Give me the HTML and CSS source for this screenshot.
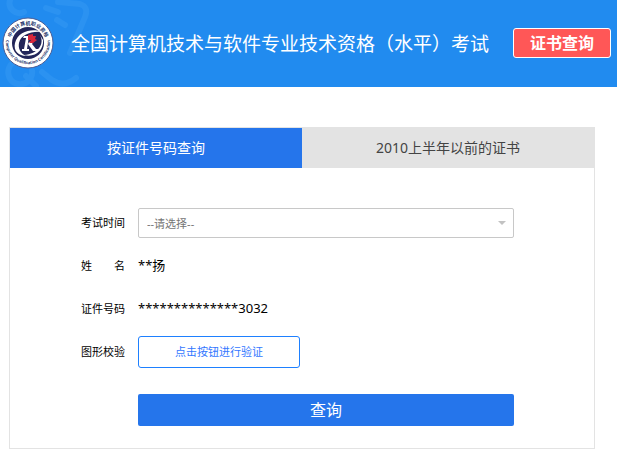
FILE: index.html
```html
<!DOCTYPE html>
<html lang="zh-CN">
	<head>
		<meta charset="UTF-8">
		<title>证书查询</title>
		<link rel="stylesheet" href="styles.css">
	</head>
	<body>
		<header class="header">
			<svg class="header-bg" width="100" height="87" viewBox="0 0 100 87" aria-hidden="true">
				<g fill="none" stroke="#2b92f1" stroke-width="6" stroke-linecap="round">
					<path d="M10 0a10 10 0 0 0 14 12M58 2l22 2q9 3 5 13l-15 36M57 20l8 5M46 8l12 4"/>
					<path d="M14 62a12 12 0 1 0 18 8M26 76l10 10M42 72l10 8q12 8 24 -2"/>
				</g>
			</svg>
			<svg class="logo" width="52" height="52" viewBox="0 0 52 52" role="img" aria-label="logo">
				<defs>
					<path id="arc-top" d="M8 26a18 18 0 0 1 36 0"/>
					<path id="arc-bottom" d="M6 16a22 22 0 1 0 40 0"/>
				</defs>
				<circle cx="26" cy="26" r="25" fill="#fff" stroke="#4a5d96" stroke-width="1"/>
				<circle cx="26" cy="26" r="16" fill="#222558"/>
				<text class="logo-cn"><textPath href="#arc-top" startOffset="50%">中国计算机职业资格</textPath></text>
				<text class="logo-en"><textPath href="#arc-bottom" startOffset="50%">Computer Qualification Certification</textPath></text>
				<path d="M40 15C31 11 16 14 13 26c-2 8 4 13 11 13-6-3-8-8-7-13 2-8 11-12 23-11z" fill="#fff"/>
				<path d="M38 18c5 9-2 19-16 20 11 3 20-5 19-15z" fill="#fff"/>
				<path d="M22 19h5l-2 13h2v2h-7v-2h2l2-11h-3zM27 25l5-1-2 3 4 5h2v2h-5l-5-7z" fill="#fff"/>
				<path d="M26 18l5-1 0 2 3 0-1 3 2 1-4 3-4 0 2-3-3 0z" fill="#d8283b"/>
			</svg>
			<h1 class="title">全国计算机技术与软件专业技术资格（水平）考试</h1>
			<a class="badge" href="#query">证书查询</a>
		</header>
		<main class="card" id="query">
			<div class="tabs">
				<button type="button" class="tab active">按证件号码查询</button>
				<button type="button" class="tab">2010上半年以前的证书</button>
			</div>
			<form class="form">
				<label class="label" for="time">考试时间</label>
				<div class="select-box">
					<select id="time" class="select">
						<option>--请选择--</option>
					</select>
				</div>
				<span class="label">姓　　名</span>
				<span class="value">**扬</span>
				<span class="label">证件号码</span>
				<span class="value">**************3032</span>
				<label class="label" for="verify">图形校验</label>
				<button type="button" id="verify" class="verify">点击按钮进行验证</button>
				<button type="submit" class="submit">查询</button>
			</form>
		</main>
	</body>
</html>
```
FILE: styles.css
```css
* {
	margin: 0;
	padding: 0;
	box-sizing: border-box;
}
body, button, select {
	font-family: "Noto Sans", "Noto Sans CJK SC", sans-serif;
}
body {
	background: #fff;
	color: #000;
}
button {
	padding-bottom: 2px;
	border: none;
	cursor: pointer;
}

.header {
	position: relative;
	display: flex;
	align-items: center;
	height: 87px;
	padding: 0 6px 2px 2px;
	background: #218bef;
	overflow: hidden;
}
.header-bg {
	position: absolute;
	left: 0;
	top: 0;
}
.logo {
	position: relative;
	flex: none;
}
.logo-cn, .logo-en {
	fill: #27396f;
	font-weight: bold;
	text-anchor: middle;
}
.logo-cn {
	font-size: 5px;
}
.logo-en {
	font-size: 4px;
}
.title {
	position: relative;
	margin-left: 17px;
	color: #fff;
	font-size: 19px;
	font-weight: normal;
	white-space: nowrap;
}
.badge {
	width: 98px;
	height: 30px;
	margin-left: auto;
	border: 1px solid #fff;
	border-radius: 3px;
	background: #ff5757;
	color: #fff;
	font-size: 16px;
	font-weight: bold;
	line-height: 28px;
	text-align: center;
	text-decoration: none;
}

.card {
	margin: 40px 22px 11px 9px;
	border: 1px solid #e3e3e3;
}
.tabs {
	display: flex;
}
.tab {
	flex: 1;
	height: 40px;
	background: #e3e3e3;
	color: #444;
	font-size: 14px;
}
.tab.active {
	background: #2575eb;
	color: #fff;
}

.form {
	display: grid;
	grid-template-columns: 45px 1fr;
	gap: 12px;
	align-items: center;
	padding: 40px 80px 22px 71px;
}
.label {
	padding-bottom: 2px;
	font-size: 11px;
	white-space: nowrap;
}
.value {
	font-size: 13px;
	line-height: 31px;
}
.select-box {
	position: relative;
}
.select-box::after {
	content: "";
	position: absolute;
	right: 8px;
	top: 13px;
	border: 4px solid transparent;
	border-top-color: #c2c2c2;
	border-bottom: none;
	pointer-events: none;
}
.select {
	display: block;
	width: 100%;
	height: 30px;
	padding: 0 8px;
	border: 1px solid #c8c8c8;
	border-radius: 2px;
	background: #fff;
	color: #757575;
	font-size: 11px;
	appearance: none;
}
.verify {
	width: 162px;
	height: 32px;
	border: 1px solid #1e80ff;
	border-radius: 3px;
	background: #fff;
	color: #3377ff;
	font-size: 11px;
}
.submit {
	grid-column: 2;
	height: 32px;
	margin-top: 14px;
	border-radius: 2px;
	background: #2575eb;
	color: #fff;
	font-size: 16px;
}
```
